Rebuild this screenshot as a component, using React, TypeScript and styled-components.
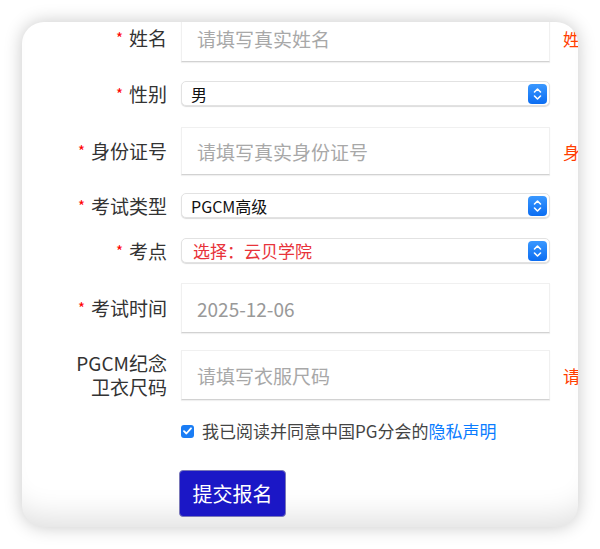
import styled, { createGlobalStyle } from "styled-components";

const GlobalStyle = createGlobalStyle`
  html, body {
    margin: 0;
    padding: 0;
    background: #ffffff;
  }
  body {
    font-family: "Noto Sans CJK SC", "Noto Sans", sans-serif;
    color: #333;
  }
`;

const Page = styled.div`
  padding: 22px;
  height: 549px;
  box-sizing: border-box;
`;

const Card = styled.div`
  width: 556px;
  height: 505px;
  background: #fff;
  border-radius: 22px;
  overflow: hidden;
  box-shadow: 0 0 18px rgba(0, 0, 0, 0.22), inset 0 -34px 30px -24px rgba(0, 0, 0, 0.12);
`;

const Form = styled.div`
  display: flex;
  flex-direction: column;
  margin-top: -8px;
`;

const Row = styled.div<{ $mt?: number; $h: number }>`
  display: flex;
  align-items: center;
  height: ${(p) => p.$h}px;
  margin-top: ${(p) => p.$mt ?? 0}px;
`;

const Label = styled.div`
  width: 145px;
  margin-right: 14px;
  text-align: right;
  font-size: 19px;
  line-height: 24px;
  color: #333;
  flex-shrink: 0;
`;

const Star = styled.span`
  color: #f00;
  font-size: 15px;
  line-height: 0;
  margin-right: 6px;
  vertical-align: 2px;
`;

const TextInput = styled.input<{ $h: number }>`
  width: 369px;
  height: ${(p) => p.$h}px;
  box-sizing: border-box;
  flex-shrink: 0;
  border: 1px solid #f0f0f0;
  border-bottom-color: #d2d2d2;
  box-shadow: 0 1px 1px rgba(0, 0, 0, 0.06);
  background: #fff;
  padding: 0 15px;
  font-family: inherit;
  font-size: 19px;
  color: #999;
  outline: none;
  &::placeholder {
    color: #a8a8a8;
  }
`;

const SelectBox = styled.div<{ $red?: boolean }>`
  width: 369px;
  height: 25px;
  box-sizing: border-box;
  flex-shrink: 0;
  display: flex;
  align-items: center;
  justify-content: space-between;
  padding: 0 2px 0 ${(p) => (p.$red ? 11 : 9)}px;
  border: 1px solid #e2e2e2;
  border-radius: 5px;
  box-shadow: 0 1px 1px rgba(0, 0, 0, 0.14);
  background: #fff;
  font-size: ${(p) => (p.$red ? 17 : 16)}px;
  color: ${(p) => (p.$red ? "#e8333a" : "#111")};
`;

const Stepper = styled.div`
  width: 19px;
  height: 20px;
  border-radius: 4px;
  background: linear-gradient(#3a98ff, #0b6df2);
  display: flex;
  align-items: center;
  justify-content: center;
`;

const ErrorText = styled.div`
  margin-left: 13px;
  white-space: nowrap;
  font-size: 17px;
  color: #ff3d00;
`;

const AgreeRow = styled.label`
  display: flex;
  align-items: center;
  margin: 20px 0 0 159px;
  font-size: 17px;
  color: #444;
  line-height: 22px;
`;

const Check = styled.span`
  width: 13px;
  height: 13px;
  border-radius: 3px;
  background: #1a7df5;
  display: flex;
  align-items: center;
  justify-content: center;
  margin-right: 8px;
`;

const Link = styled.a`
  color: #0a7cff;
  text-decoration: none;
`;

const SubmitButton = styled.button`
  margin: 28px 0 0 157px;
  width: 107px;
  height: 47px;
  align-self: flex-start;
  border: 1px solid #7a78b8;
  border-radius: 4px;
  background: #1b17c6;
  color: #fff;
  font-family: inherit;
  font-size: 20px;
  cursor: pointer;
`;

const Chevrons = () => (
  <svg width="11" height="14" viewBox="0 0 11 14" fill="none">
    <path d="M2.5 5 L5.5 2 L8.5 5" stroke="#fff" strokeWidth="1.6" strokeLinecap="round" strokeLinejoin="round" />
    <path d="M2.5 9 L5.5 12 L8.5 9" stroke="#fff" strokeWidth="1.6" strokeLinecap="round" strokeLinejoin="round" />
  </svg>
);

const Select = ({ value, red }: { value: string; red?: boolean }) => (
  <SelectBox $red={red}>
    <span>{value}</span>
    <Stepper>
      <Chevrons />
    </Stepper>
  </SelectBox>
);

const App = () => {
  return (
    <Page>
      <GlobalStyle />
      <Card>
        <Form>
          <Row $h={48}>
            <Label>
              <Star>*</Star>姓名
            </Label>
            <TextInput $h={48} placeholder="请填写真实姓名" />
            <ErrorText>姓名不能为空</ErrorText>
          </Row>
          <Row $h={25} $mt={19}>
            <Label>
              <Star>*</Star>性别
            </Label>
            <Select value="男" />
          </Row>
          <Row $h={48} $mt={21}>
            <Label>
              <Star>*</Star>身份证号
            </Label>
            <TextInput $h={48} placeholder="请填写真实身份证号" />
            <ErrorText>身份证号不能为空</ErrorText>
          </Row>
          <Row $h={25} $mt={18}>
            <Label>
              <Star>*</Star>考试类型
            </Label>
            <Select value="PGCM高级" />
          </Row>
          <Row $h={25} $mt={20}>
            <Label>
              <Star>*</Star>考点
            </Label>
            <Select value="选择：云贝学院" red />
          </Row>
          <Row $h={50} $mt={20}>
            <Label>
              <Star>*</Star>考试时间
            </Label>
            <TextInput $h={50} value="2025-12-06" readOnly />
          </Row>
          <Row $h={50} $mt={17}>
            <Label>
              PGCM纪念
              <br />
              卫衣尺码
            </Label>
            <TextInput $h={50} placeholder="请填写衣服尺码" />
            <ErrorText>请填写衣服尺码</ErrorText>
          </Row>
          <AgreeRow>
            <Check>
              <svg width="9" height="8" viewBox="0 0 9 8" fill="none">
                <path d="M1 4.2 L3.4 6.5 L8 1.3" stroke="#fff" strokeWidth="1.8" strokeLinecap="round" strokeLinejoin="round" />
              </svg>
            </Check>
            我已阅读并同意中国PG分会的<Link href="#">隐私声明</Link>
          </AgreeRow>
          <SubmitButton>提交报名</SubmitButton>
        </Form>
      </Card>
    </Page>
  );
};

export default App;
